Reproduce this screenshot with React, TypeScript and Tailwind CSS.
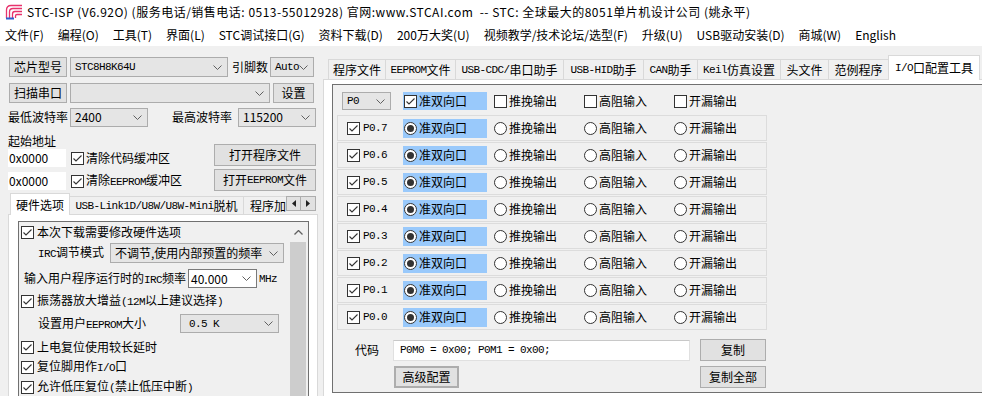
import React from "react";

const MONO = "font-['Liberation_Mono',monospace] text-[11px] tracking-[-0.6px]";

function T({ s }: { s: string }) {
  const parts = s.split(/([\x20-\x7e]+)/).filter((p) => p !== "");
  return (
    <>
      {parts.map((p, i) =>
        /^[\x20-\x7e]+$/.test(p) ? (
          <span key={i} className={MONO}>
            {p}
          </span>
        ) : (
          <span key={i}>{p}</span>
        )
      )}
    </>
  );
}

function Chev() {
  return (
    <svg width="9" height="5" viewBox="0 0 9 5" className="shrink-0">
      <path d="M0.5 0.5 L4.5 4.5 L8.5 0.5" fill="none" stroke="#606060" strokeWidth="1" />
    </svg>
  );
}

function Check({ className = "", on = true }: { className?: string; on?: boolean }) {
  return (
    <span
      className={`inline-flex w-[13px] h-[13px] border border-[#333333] bg-white items-center justify-center shrink-0 ${className}`}
    >
      {on && (
        <svg width="11" height="11" viewBox="0 0 11 11">
          <path d="M1.5 5.5 L4 8 L9.5 2.5" fill="none" stroke="#333333" strokeWidth="1.1" />
        </svg>
      )}
    </span>
  );
}

function Radio({ on = false }: { on?: boolean }) {
  return (
    <span className="inline-flex w-[13px] h-[13px] rounded-full border border-[#333333] bg-white items-center justify-center shrink-0">
      {on && <span className="w-[7px] h-[7px] rounded-full bg-[#333333]" />}
    </span>
  );
}

function Btn({ className = "", children }: { className?: string; children?: React.ReactNode }) {
  return (
    <div
      className={`flex items-center justify-center bg-[#e1e1e1] border border-[#adadad] shrink-0 whitespace-nowrap ${className}`}
    >
      {children}
    </div>
  );
}

function Combo({ className = "", children }: { className?: string; children?: React.ReactNode }) {
  return (
    <div
      className={`flex items-center justify-between bg-[#e5e5e5] border border-[#acacac] pl-[4px] pr-[5px] shrink-0 whitespace-nowrap ${className}`}
    >
      <span className="flex items-center">{children}</span>
      <Chev />
    </div>
  );
}

function Logo() {
  return (
    <svg width="18" height="16" viewBox="0 0 18 16" className="shrink-0">
      <g fill="none" stroke="#e8336d" strokeWidth="1.3">
        <path d="M1.5 14 V6 Q1.5 1.5 6 1.5 H17" />
        <path d="M4.5 14 V8 Q4.5 4.5 8 4.5 H17" />
        <path d="M7.5 14 V10 Q7.5 7.5 10 7.5 H17" />
        <path d="M10.5 14 V12 Q10.5 10.5 12 10.5 H17" />
      </g>
      <path d="M1 14.5 H9" stroke="#2c5fd0" strokeWidth="2" />
    </svg>
  );
}

function TitleBar() {
  return (
    <div className="h-[23px] bg-white flex items-center pl-[5px] shrink-0">
      <Logo />
      <span className="ml-[4px] whitespace-pre tracking-[0.5px]">
        STC-ISP (V6.92O) (服务电话/销售电话: 0513-55012928) 官网:www.STCAI.com  -- STC: 全球最大的8051单片机设计公司 (姚永平)
      </span>
    </div>
  );
}

function MenuBar() {
  const items = [
    "文件(F)",
    "编程(O)",
    "工具(T)",
    "界面(L)",
    "STC调试接口(G)",
    "资料下载(D)",
    "200万大奖(U)",
    "视频教学/技术论坛/选型(F)",
    "升级(U)",
    "USB驱动安装(D)",
    "商城(W)",
    "English",
  ];
  return (
    <div className="h-[23px] bg-white flex items-center pl-[5px] gap-[14px] shrink-0 whitespace-nowrap">
      {items.map((t) => (
        <span key={t}>{t}</span>
      ))}
    </div>
  );
}

function LeftPanel() {
  return (
    <div className="w-[322px] shrink-0 flex flex-col">
      <div className="flex items-center mt-[11px] h-[20px]">
        <Btn className="ml-[9px] w-[58px] h-[20px]">芯片型号</Btn>
        <Combo className="ml-[3px] w-[158px] h-[20px]">
          <span className={MONO}>STC8H8K64U</span>
        </Combo>
        <span className="ml-[4px]">引脚数</span>
        <Combo className="ml-[2px] w-[44px] h-[20px] pl-[3px] pr-[3px]">
          <span className={MONO}>Auto</span>
        </Combo>
      </div>
      <div className="flex items-center mt-[6px] h-[20px]">
        <Btn className="ml-[9px] w-[58px] h-[20px]">扫描串口</Btn>
        <Combo className="ml-[3px] w-[200px] h-[20px]" />
        <Btn className="ml-[3px] w-[41px] h-[20px]">设置</Btn>
      </div>
      <div className="flex items-center mt-[4px] h-[20px]">
        <span className="ml-[8px]">最低波特率</span>
        <Combo className="ml-[2px] w-[78px] h-[19px] pl-[2px]">
          <span>2400</span>
        </Combo>
        <span className="ml-[24px]">最高波特率</span>
        <Combo className="ml-[6px] w-[78px] h-[19px] pl-[2px]">
          <span>115200</span>
        </Combo>
      </div>
      <div className="flex mt-[6px]">
        <div className="flex flex-col w-[206px]">
          <span className="ml-[8px] h-[15px] leading-[15px]">起始地址</span>
          <div className="flex items-center mt-[1px] h-[18px]">
            <div className="ml-[8px] w-[58px] h-[18px] bg-white flex items-center pl-[1px]">0x0000</div>
            <Check className="ml-[5px]" />
            <span className="ml-[2px]">清除代码缓冲区</span>
          </div>
          <div className="flex items-center mt-[5px] h-[18px]">
            <div className="ml-[8px] w-[58px] h-[18px] bg-white flex items-center pl-[1px]">0x0000</div>
            <Check className="ml-[5px]" />
            <span className="ml-[2px]">
              <T s="清除EEPROM缓冲区" />
            </span>
          </div>
        </div>
        <div className="flex flex-col pt-[11px]">
          <Btn className="ml-[8px] w-[102px] h-[22px]">打开程序文件</Btn>
          <Btn className="ml-[8px] mt-[3px] w-[102px] h-[22px]">
            <T s="打开EEPROM文件" />
          </Btn>
        </div>
      </div>
      {/* tab strip */}
      <div className="flex items-end h-[21px] mt-[2px] ml-[8px] shrink-0">
        <div className="relative z-10 ml-[2px] mb-[-1px] h-[22px] w-[60px] bg-white border border-b-0 border-[#d9d9d9] flex items-center justify-center">
          硬件选项
        </div>
        <div className="h-[18px] w-[174px] border-t border-r border-[#d9d9d9] flex items-center justify-center whitespace-nowrap">
          <T s="USB-Link1D/U8W/U8W-Mini脱机" />
        </div>
        <div className="h-[18px] w-[42px] overflow-hidden border-t border-[#d9d9d9] flex items-center pl-[6px] whitespace-nowrap">
          程序加载
        </div>
        <div className="self-start mt-[3px] flex">
          <div className="w-[15px] h-[15px] border border-[#adadad] bg-[#e1e1e1] flex items-center justify-center">
            <svg width="4" height="7" viewBox="0 0 4 7">
              <path d="M4 0 L0 3.5 L4 7 Z" fill="#222" />
            </svg>
          </div>
          <div className="w-[15px] h-[15px] border border-l-0 border-[#adadad] bg-[#e1e1e1] flex items-center justify-center">
            <svg width="4" height="7" viewBox="0 0 4 7">
              <path d="M0 0 L4 3.5 L0 7 Z" fill="#222" />
            </svg>
          </div>
        </div>
      </div>
      {/* tab page */}
      <div className="ml-[8px] w-[310px] flex-1 bg-white border border-b-0 border-[#d9d9d9] flex flex-col overflow-hidden">
        <div className="mt-[6px] ml-[9px] w-[291px] flex-1 border border-b-0 border-[#707070] bg-[#f0f0f0] flex">
          <div className="flex-1 flex flex-col pl-[2px] whitespace-nowrap">
            <div className="flex items-center h-[20px]">
              <Check />
              <span className="ml-[3px]">本次下载需要修改硬件选项</span>
            </div>
            <div className="flex items-center h-[20px] mt-[1px]">
              <span className="ml-[17px] w-[72px]">
                <T s="IRC调节模式" />
              </span>
              <Combo className="w-[174px] h-[20px]">
                <span>不调节,使用内部预置的频率</span>
              </Combo>
            </div>
            <div className="flex items-center h-[19px] mt-[6px]">
              <span className="ml-[3px] w-[164px]">
                <T s="输入用户程序运行时的IRC频率" />
              </span>
              <div className="w-[69px] h-[19px] bg-white border border-[#7a7a7a] flex items-center justify-between pl-[2px] pr-[5px]">
                <span>40.000</span>
                <Chev />
              </div>
              <span className={`${MONO} ml-[2px]`}>MHz</span>
            </div>
            <div className="flex items-center h-[20px] mt-[3px]">
              <Check />
              <span className="ml-[3px]">
                <T s="振荡器放大增益(12M以上建议选择)" />
              </span>
            </div>
            <div className="flex items-center h-[19px] mt-[3px]">
              <span className="ml-[17px] w-[142px]">
                <T s="设置用户EEPROM大小" />
              </span>
              <Combo className="w-[99px] h-[19px] pl-[8px]">
                <span className={MONO}>0.5 K</span>
              </Combo>
            </div>
            <div className="flex items-center h-[20px] mt-[4px]">
              <Check />
              <span className="ml-[3px]">上电复位使用较长延时</span>
            </div>
            <div className="flex items-center h-[20px]">
              <Check />
              <span className="ml-[3px]">
                <T s="复位脚用作I/O口" />
              </span>
            </div>
            <div className="flex items-center h-[20px]">
              <Check />
              <span className="ml-[3px]">
                <T s="允许低压复位(禁止低压中断)" />
              </span>
            </div>
          </div>
          <div className="w-[16px] mr-[2px] flex flex-col">
            <div className="h-[20px] flex items-center justify-center">
              <svg width="9" height="5" viewBox="0 0 9 5">
                <path d="M0.5 4.5 L4.5 0.5 L8.5 4.5" fill="none" stroke="#606060" strokeWidth="1.3" />
              </svg>
            </div>
            <div className="flex-1 bg-[#cdcdcd]" />
          </div>
        </div>
      </div>
    </div>
  );
}

const TABS: [string, string][] = [
  ["程序文件", "w-[57px]"],
  ["EEPROM文件", "w-[70px]"],
  ["USB-CDC/串口助手", "w-[108px]"],
  ["USB-HID助手", "w-[80px]"],
  ["CAN助手", "w-[54px]"],
  ["Keil仿真设置", "w-[83px]"],
  ["头文件", "w-[48px]"],
  ["范例程序", "w-[60px]"],
];

const PINS = ["P0.7", "P0.6", "P0.5", "P0.4", "P0.3", "P0.2", "P0.1", "P0.0"];
const MODES = ["推挽输出", "高阻输入", "开漏输出"];

function RightPanel() {
  return (
    <div className="flex-1 min-w-0 flex flex-col ml-[1px] pt-[9px]">
      <div className="flex items-end h-[24px] pl-[5px] shrink-0 whitespace-nowrap">
        {TABS.map(([t, w]) => (
          <div
            key={t}
            className={`${w} h-[20px] border-t border-l border-[#d9d9d9] bg-[#f0f0f0] flex items-center justify-center`}
          >
            <T s={t} />
          </div>
        ))}
        <div className="relative z-10 mb-[-1px] w-[92px] h-[25px] bg-white border border-b-0 border-[#d9d9d9] flex items-center justify-center">
          <T s="I/O口配置工具" />
        </div>
      </div>
      <div className="flex-1 bg-white border-t border-l border-[#d9d9d9]">
        <div className="mt-[4px] ml-[8px] h-[309px] border-t border-l border-b border-[#707070] bg-[#f0f0f0] flex flex-col whitespace-nowrap">
          {/* header */}
          <div className="flex items-center mt-[7px] h-[18px]">
            <Combo className="ml-[9px] w-[49px] h-[18px]">
              <span className={MONO}>P0</span>
            </Combo>
            <div className="ml-[12px] w-[90px]">
              <div className="w-[84px] h-[18px] bg-[#99c9fb] flex items-center pl-[1px]">
                <Check />
                <span className="ml-[2px]">准双向口</span>
              </div>
            </div>
            {MODES.map((m) => (
              <div key={m} className="w-[90px] flex items-center pl-[1px]">
                <Check on={false} />
                <span className="ml-[2px]">{m}</span>
              </div>
            ))}
          </div>
          {/* rows */}
          <div className="mt-[5px] ml-[4px] w-[430px] flex flex-col gap-[1px]">
            {PINS.map((p) => (
              <div key={p} className="h-[26px] border border-[#dcdcdc] flex items-center">
                <div className="w-[65px] flex items-center pl-[9px]">
                  <Check />
                  <span className={`${MONO} ml-[3px]`}>{p}</span>
                </div>
                <div className="w-[90px]">
                  <div className="w-[84px] h-[19px] bg-[#99c9fb] flex items-center pl-[1px]">
                    <Radio on />
                    <span className="ml-[2px]">准双向口</span>
                  </div>
                </div>
                {MODES.map((m) => (
                  <div key={m} className="w-[90px] flex items-center pl-[1px]">
                    <Radio />
                    <span className="ml-[2px]">{m}</span>
                  </div>
                ))}
              </div>
            ))}
          </div>
          {/* code */}
          <div className="flex items-center mt-[9px] h-[22px]">
            <span className="ml-[22px]">代码</span>
            <div className="ml-[14px] w-[297px] h-[21px] bg-white border border-[#e0e0e0] border-t-[#c8c8c8] flex items-center pl-[6px]">
              <span className={MONO}>P0M0 = 0x00; P0M1 = 0x00;</span>
            </div>
            <Btn className="ml-[10px] w-[66px] h-[22px]">复制</Btn>
          </div>
          <div className="flex items-center mt-[5px] h-[22px]">
            <Btn className="ml-[61px] w-[65px] h-[22px] border-2 border-[#0078d7]">高级配置</Btn>
            <Btn className="ml-[241px] w-[66px] h-[22px]">复制全部</Btn>
          </div>
        </div>
      </div>
    </div>
  );
}

export default function App() {
  return (
    <div className="w-[982px] h-[396px] overflow-hidden bg-[#f0f0f0] text-[12px] leading-[16px] text-black font-['Noto_Sans_CJK_SC',sans-serif] flex flex-col">
      <TitleBar />
      <MenuBar />
      <div className="flex flex-1 min-h-0">
        <LeftPanel />
        <RightPanel />
      </div>
    </div>
  );
}
